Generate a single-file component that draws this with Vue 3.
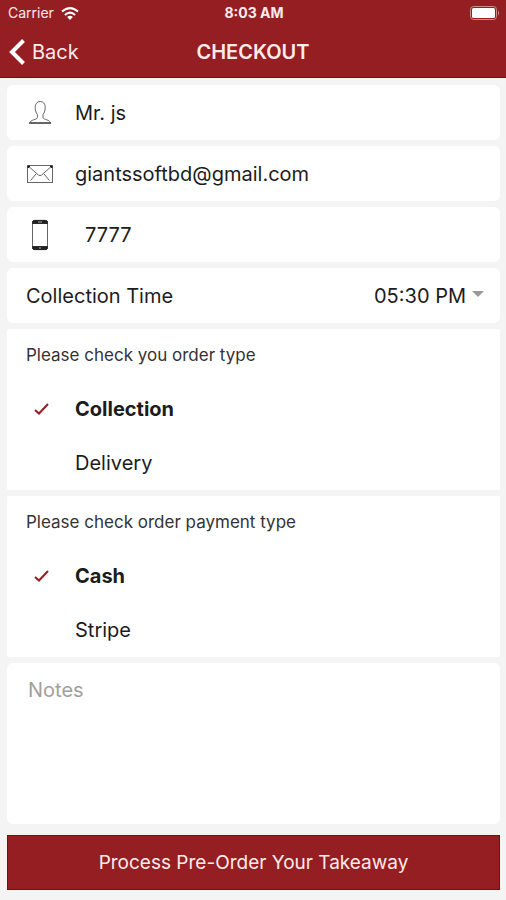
<script setup>
import { ref } from 'vue'

const name = ref('Mr. js')
const email = ref('giantssoftbd@gmail.com')
const phone = ref('7777')
const time = ref('05:30 PM')
const times = ['05:30 PM', '05:45 PM', '06:00 PM', '06:15 PM']
const notes = ref('')

const groups = ref([
  { id: 'order', title: 'Please check you order type', options: ['Collection', 'Delivery'], value: 'Collection' },
  { id: 'payment', title: 'Please check order payment type', options: ['Cash', 'Stripe'], value: 'Cash' },
])
</script>

<template>
  <div class="screen">
    <header class="top">
      <div class="status">
        <div class="carrier">
          <span>Carrier</span>
          <svg class="wifi" viewBox="0 0 18 13" aria-hidden="true">
            <path d="M1 4.6Q9-2.4 17 4.6" />
            <path d="M3.9 7.9Q9 3.4 14.1 7.9" />
            <path class="dot" d="M6.1 10Q9 7.6 11.9 10L9 13Z" />
          </svg>
        </div>
        <span class="clock">8:03 AM</span>
        <svg class="battery" viewBox="0 0 30 14" aria-hidden="true">
          <rect class="shell" x="0.5" y="0.5" width="26" height="13" rx="3" />
          <rect class="charge" x="2" y="2" width="23" height="10" rx="1.5" />
          <path class="tip" d="M28 4.5Q30 7 28 9.5Z" />
        </svg>
      </div>
      <nav class="nav">
        <a class="back" href="#back">
          <svg viewBox="0 0 16 26" aria-hidden="true"><path d="M14.5 1.5 3 13 14.5 24.5" /></svg>
          <span>Back</span>
        </a>
        <h1>CHECKOUT</h1>
      </nav>
    </header>

    <form class="form" @submit.prevent>
      <label class="card field">
        <svg viewBox="0 0 28 32" aria-hidden="true">
          <path d="M11.4 17.5C8.4 14 7.6 4.6 14.2 4.5C20.8 4.6 20 14 17 17.5V20.6C17.4 22.8 24.2 22.4 24.8 26.4H3.6C4.2 22.4 11 22.8 11.4 20.6Z" />
          <path class="strong" d="M3 26H25" />
        </svg>
        <input v-model="name" type="text" aria-label="Name" />
      </label>
      <label class="card field">
        <svg viewBox="0 0 28 32" aria-hidden="true">
          <rect x="1.5" y="7.5" width="25" height="17" />
          <path d="M1.5 7.5 12.4 17Q14 18.2 15.6 17L26.5 7.5M4.5 22.5 10 16M23.5 22.5 18 16" />
          <path class="solid" d="M2 8H4L2 10ZM26 8H24L26 10Z" />
        </svg>
        <input v-model="email" type="email" aria-label="Email" />
      </label>
      <label class="card field phone">
        <svg viewBox="0 0 28 32" aria-hidden="true">
          <rect x="6.5" y="1.5" width="15" height="29" rx="2" />
          <path class="solid" d="M6.5 4.4V3.4Q6.5 1.4 8.5 1.4H19.5Q21.5 1.4 21.5 3.4V4.4ZM6.5 27.6V28.6Q6.5 30.6 8.5 30.6H19.5Q21.5 30.6 21.5 28.6V27.6Z" />
          <path class="light" d="M12 3H16M13 29H15" />
        </svg>
        <input v-model="phone" type="tel" aria-label="Phone" />
      </label>
      <div class="card time">
        <label for="time">Collection Time</label>
        <div class="picker">
          <select id="time" v-model="time">
            <option v-for="t in times" :key="t">{{ t }}</option>
          </select>
          <svg viewBox="0 0 12 10" aria-hidden="true"><path d="M0 0H12L6 6Z" /></svg>
        </div>
      </div>

      <fieldset v-for="g in groups" :key="g.id" class="card group">
        <legend>{{ g.title }}</legend>
        <label v-for="o in g.options" :key="o" class="option" :class="{ checked: g.value === o }">
          <span class="mark">
            <input v-model="g.value" type="radio" :name="g.id" :value="o" />
            <svg v-if="g.value === o" viewBox="0 0 16 14" aria-hidden="true"><path d="M2 8 6 11.5 15 2" /></svg>
          </span>
          <span>{{ o }}</span>
        </label>
      </fieldset>

      <textarea v-model="notes" class="card notes" placeholder="Notes" aria-label="Notes"></textarea>
      <button class="submit" type="submit">Process Pre-Order Your Takeaway</button>
    </form>
  </div>
</template>

<style>
body {
  background: #f4f4f4;
}
</style>

<style scoped>
.screen {
  font-family: Inter, "Liberation Sans", sans-serif;
  font-size: 20px;
  line-height: 24px;
  color: #1c1c1c;
}
.screen * {
  box-sizing: border-box;
}
input,
select,
textarea,
button {
  font: inherit;
  color: inherit;
  border: 0;
  margin: 0;
  padding: 0;
  background: none;
  border-radius: 0;
}
.top {
  background: #941e22;
  border-bottom: 1px solid #7c0a0e;
  color: #fbeceb;
}
.status {
  display: grid;
  grid-template-columns: 1fr auto 1fr;
  align-items: center;
  height: 26px;
  padding: 0 6px 0 8px;
  font-size: 14px;
  line-height: 16px;
}
.carrier {
  display: flex;
  align-items: center;
  gap: 7px;
}
.wifi {
  width: 18px;
  height: 13px;
  fill: none;
  stroke: #fff;
  stroke-width: 2;
}
.wifi .dot {
  fill: #fff;
  stroke: none;
}
.clock {
  font-weight: 700;
}
.battery {
  justify-self: end;
  width: 30px;
  height: 14px;
}
.shell {
  fill: none;
  stroke: #d08a8c;
}
.charge {
  fill: #fff;
}
.tip {
  fill: #d08a8c;
}
.nav {
  display: grid;
  grid-template-columns: 1fr auto 1fr;
  align-items: center;
  height: 51px;
  padding: 0 9px;
}
.back {
  display: flex;
  align-items: center;
  gap: 7px;
  color: inherit;
  text-decoration: none;
}
.back svg {
  width: 16px;
  height: 26px;
  fill: none;
  stroke: #fff;
  stroke-width: 4;
}
h1 {
  margin: 0;
  font-size: 20px;
  line-height: 24px;
  font-weight: 600;
}
.form {
  display: flex;
  flex-direction: column;
  gap: 6px;
  padding: 7px 6px 10px 7px;
}
.card {
  background: #fff;
  border-radius: 6px;
}
.field {
  display: flex;
  align-items: center;
  gap: 15px;
  height: 55px;
  padding: 0 19px;
}
.field svg {
  flex: none;
  width: 28px;
  height: 32px;
  fill: none;
  stroke: #666;
  stroke-width: 1;
}
.field .strong {
  stroke-width: 2;
}
.field .solid {
  fill: #222;
  stroke: #222;
}
.field .light {
  stroke: #aaa;
}
.field input {
  flex: 1;
  min-width: 0;
  padding-left: 6px;
}
.phone input {
  padding-left: 16px;
}
.time {
  display: flex;
  align-items: center;
  justify-content: space-between;
  height: 55px;
  padding: 0 16px 0 19px;
}
.picker {
  display: grid;
  align-items: center;
}
.picker select {
  grid-area: 1 / 1;
  appearance: none;
  padding-right: 17px;
}
.picker svg {
  grid-area: 1 / 1;
  justify-self: end;
  width: 12px;
  height: 10px;
  fill: #999;
  pointer-events: none;
}
.group {
  border: 0;
  margin: 0;
  padding: 0 19px;
  min-width: 0;
  border-radius: 2px;
}
.group legend {
  float: left;
  width: 100%;
  padding: 0;
  font-size: 17px;
  line-height: 53px;
  color: #333;
}
.option {
  clear: both;
  display: flex;
  align-items: center;
  height: 54px;
}
.option.checked {
  font-weight: 700;
}
.mark {
  display: grid;
  place-items: center;
  width: 30px;
  height: 24px;
  margin-right: 19px;
}
.mark input {
  grid-area: 1 / 1;
  appearance: none;
  width: 24px;
  height: 24px;
}
.mark svg {
  grid-area: 1 / 1;
  width: 16px;
  height: 14px;
  fill: none;
  stroke: #941e22;
  stroke-width: 2;
  pointer-events: none;
}
.notes {
  display: block;
  width: 100%;
  height: 161px;
  padding: 15px 21px;
  resize: none;
}
.notes::placeholder {
  color: #a0a0a0;
  opacity: 1;
}
.submit {
  height: 55px;
  margin-top: 5px;
  border: 1px solid #84080c;
  background: #941e22;
  color: #fbeceb;
  font-size: 19px;
}
</style>
